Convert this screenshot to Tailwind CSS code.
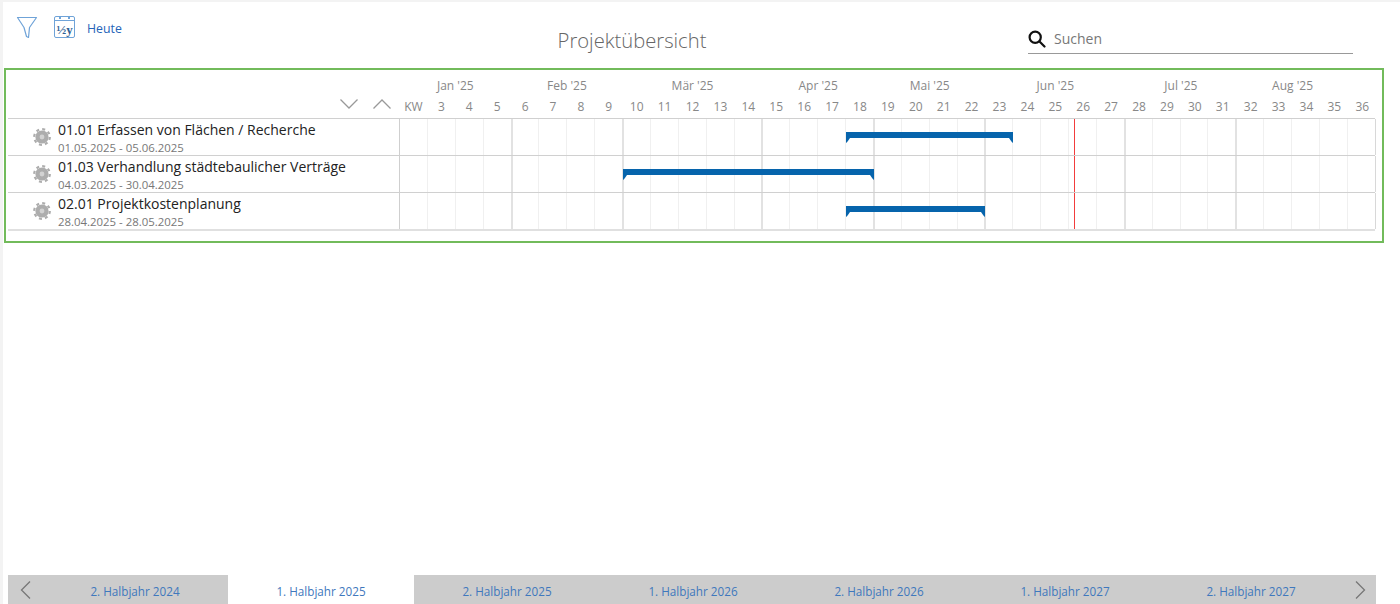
<!DOCTYPE html>
<html lang="de">
<head>
  <meta charset="UTF-8">
  <title>Projektübersicht</title>
  <script src="https://cdn.jsdelivr.net/npm/@tailwindcss/browser@4"></script>
</head>
<body class="bg-[#f3f3f3] pl-[3px] pt-[2px] h-[604px] overflow-hidden font-['Open_Sans','Noto_Sans',sans-serif]">
  <div class="bg-white h-[602px] flex flex-col">

    <!-- Kopfzeile -->
    <div class="h-[66px] flex shrink-0">
      <div class="w-[502px] flex items-start pl-[13px] pt-[14px]">
        <svg class="w-[22px] h-[23px]" viewBox="0 0 22 23" fill="none" stroke="#6fa3d8" stroke-width="1.2" stroke-linejoin="round">
          <path d="M1.5 1.5H20.5L13.5 11.5L12.5 21.5L10.5 20.5L8 11.5Z"/>
        </svg>
        <div class="ml-[16px] w-[21px] h-[22px] border border-[#6fa3d8] rounded-[2px] relative flex items-end justify-center">
          <div class="absolute left-0 right-0 top-[3px] border-t border-[#6fa3d8]"></div>
          <div class="absolute left-[4px] top-[-1px] w-[2px] h-[3px] bg-[#6fa3d8]"></div>
          <div class="absolute right-[4px] top-[-1px] w-[2px] h-[3px] bg-[#6fa3d8]"></div>
          <span class="text-[13px] leading-[15px] font-bold text-[#2f5f93] font-['Liberation_Serif',serif]">½y</span>
        </div>
        <span class="ml-[12px] mt-[2px] text-[12.3px] leading-[22px] text-[#2563b8]">Heute</span>
      </div>
      <div class="w-[254px] text-center text-[20.2px] font-light text-[#666] leading-[27px] pt-[25px]">Projektübersicht</div>
      <div class="ml-[269px] w-[325px] h-[52px] pt-[26px] flex flex-col">
        <div class="flex items-center h-[26px] border-b border-[#999] pb-[4px]">
          <svg class="w-[18px] h-[18px]" viewBox="0 0 18 18" fill="none" stroke="#111" stroke-width="2.2" stroke-linecap="round">
            <circle cx="7.2" cy="7.2" r="5.6"/>
            <path d="M11.5 11.5L16.5 16.5"/>
          </svg>
          <span class="ml-[8px] text-[14px] text-[#777]">Suchen</span>
        </div>
      </div>
    </div>

    <!-- Gantt -->
    <div class="ml-[1px] w-[1380px] h-[175px] border-2 border-[#72bb5b] pl-[2px] shrink-0">
      <div class="flex h-[49px] border-b border-[#d0d0d0] w-[1367px]">
        <div class="w-[391.5px] shrink-0 flex items-end justify-end pb-[9px] pr-[9px] gap-[15px]">
          <svg class="w-[18px] h-[10px]" viewBox="0 0 18 10" fill="none" stroke="#999" stroke-width="1.3"><path d="M0.5 0.5L9 9L17.5 0.5"/></svg>
          <svg class="w-[18px] h-[10px]" viewBox="0 0 18 10" fill="none" stroke="#999" stroke-width="1.3"><path d="M0.5 9.5L9 1L17.5 9.5"/></svg>
        </div>
        <div class="w-[977px] shrink-0 text-[12px] text-[#888] text-center">
          <div id="months" class="flex h-[29px] leading-[32px]"></div>
          <div id="weeks" class="flex h-[19px] leading-[15px]"></div>
        </div>
      </div>
      <div id="rows" class="w-[1367px]"></div>
    </div>

    <div class="flex-1"></div>

    <!-- Halbjahre -->
    <div class="ml-[5px] w-[1368px] h-[29px] flex bg-[#cccccc] text-[11.7px] text-[#3f78bd] shrink-0">
      <div class="w-[34px] flex items-center justify-center">
        <svg class="w-[11px] h-[18px]" viewBox="0 0 11 18" fill="none" stroke="#777" stroke-width="1.3"><path d="M10 0.5L1.5 9L10 17.5"/></svg>
      </div>
      <div class="w-[186px] text-center leading-[33px]">2. Halbjahr 2024</div>
      <div class="w-[186px] text-center leading-[33px] bg-white">1. Halbjahr 2025</div>
      <div class="w-[186px] text-center leading-[33px]">2. Halbjahr 2025</div>
      <div class="w-[186px] text-center leading-[33px]">1. Halbjahr 2026</div>
      <div class="w-[186px] text-center leading-[33px]">2. Halbjahr 2026</div>
      <div class="w-[186px] text-center leading-[33px]">1. Halbjahr 2027</div>
      <div class="w-[186px] text-center leading-[33px]">2. Halbjahr 2027</div>
      <div class="w-[32px] flex items-center justify-center">
        <svg class="w-[11px] h-[18px]" viewBox="0 0 11 18" fill="none" stroke="#777" stroke-width="1.3"><path d="M1 0.5L9.5 9L1 17.5"/></svg>
      </div>
    </div>
  </div>

  <script>
    const headW = 27.91;
    const colW = 27.88;
    const months = [["Jan '25", 4], ["Feb '25", 4], ["Mär '25", 5], ["Apr '25", 4], ["Mai '25", 4], ["Jun '25", 5], ["Jul '25", 4], ["Aug '25", 4], ["", 1]];
    const tasks = [
      { name: "01.01 Erfassen von Flächen / Recherche", date: "01.05.2025 - 05.06.2025", from: 16, to: 22 },
      { name: "01.03 Verhandlung städtebaulicher Verträge", date: "04.03.2025 - 30.04.2025", from: 8, to: 17 },
      { name: "02.01 Projektkostenplanung", date: "28.04.2025 - 28.05.2025", from: 16, to: 21 }
    ];
    const todayLeft = 675;

    document.getElementById("months").innerHTML = months.map(m =>
      `<div style="width:${m[1] * headW}px">${m[0]}</div>`).join("");

    let weeks = `<div style="width:${headW}px">KW</div>`;
    for (let w = 3; w <= 36; w++) weeks += `<div style="width:${headW}px">${w}</div>`;
    document.getElementById("weeks").innerHTML = weeks;

    // Spaltenlinien: Monatsanfang dunkler
    const monthStarts = [];
    let c = 0;
    months.slice(0, 7).forEach(m => { monthStarts.push(c); c += m[1]; });
    monthStarts.push(c);

    function cells() {
      let out = "";
      for (let i = 0; i < 35; i++) {
        const cls = i === 0 ? "border-l border-[#cfcfcf]"
          : monthStarts.includes(i) ? "border-l-2 border-[#e2e2e2]"
          : "border-l border-[#f0f0f0]";
        out += `<div class="h-full ${cls}" style="width:${colW}px"></div>`;
      }
      return out;
    }

    function tab(x, flip) {
      const pts = flip ? "4,0 0,0 2.8,4 4,5" : "0,0 4,0 1.2,4 0,5";
      return `<svg class="absolute top-[19px] w-[4px] h-[5px]" style="left:${x}px" viewBox="0 0 4 5"><polygon points="${pts}" fill="#0664ac"/></svg>`;
    }

    document.getElementById("rows").innerHTML = tasks.map((t, i) => `
      <div class="flex ${i === 2 ? "h-[38px] border-b-2 border-[#e0e0e0]" : "h-[37px] border-b border-[#d0d0d0]"}">
        <div class="w-[391px] flex items-center pl-[25px] shrink-0">
          <svg class="w-[18px] h-[18px] shrink-0" viewBox="0 0 18 18">
            <circle cx="9" cy="9" r="6.6" fill="#adadad"/>
            <circle cx="9" cy="9" r="7.8" fill="none" stroke="#adadad" stroke-width="2.2" stroke-dasharray="3 3.12"/>
            <circle cx="9" cy="9" r="2.4" fill="#d2d2d2"/>
          </svg>
          <div class="ml-[7px] mt-[4px] whitespace-nowrap">
            <div class="text-[14px] leading-[18px] text-[#222]">${t.name}</div>
            <div class="text-[11.4px] leading-[18px] text-[#777]">${t.date}</div>
          </div>
        </div>
        <div class="relative flex border-r border-[#d8d8d8]">
          ${cells()}
          <div class="absolute top-0 bottom-0 w-px bg-[#f23c3c]" style="left:${todayLeft}px"></div>
          <div class="absolute top-[13px] h-[6px] bg-[#0664ac]" style="left:${t.from * colW + 0.5}px;width:${(t.to - t.from) * colW + 0.5}px"></div>
          ${tab(t.from * colW + 0.5, false)}
          ${tab(t.to * colW - 3, true)}
        </div>
      </div>`).join("");
  </script>
</body>
</html>
